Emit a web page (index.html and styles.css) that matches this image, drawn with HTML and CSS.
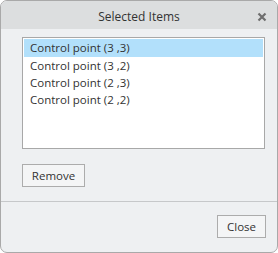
FILE: index.html
```html
<!DOCTYPE html>
<html>
<head>
<meta charset="utf-8">
<link rel="stylesheet" href="styles.css">
</head>
<body>
<div class="dialog">
  <div class="titlebar">
    <span class="title">Selected Items</span>
    <span class="close-x">
      <svg width="10" height="10" viewBox="0 0 10 10"><path d="M1.5 1.5 L8.5 8.5 M8.5 1.5 L1.5 8.5" stroke="#6e6e6e" stroke-width="2.2" stroke-linecap="butt"/></svg>
    </span>
  </div>
  <div class="content">
    <ul class="list">
      <li class="item selected">Control point (3 ,3)</li>
      <li class="item">Control point (3 ,2)</li>
      <li class="item">Control point (2 ,3)</li>
      <li class="item">Control point (2 ,2)</li>
    </ul>
    <button class="btn remove">Remove</button>
  </div>
  <div class="footer">
    <button class="btn close">Close</button>
  </div>
</div>
</body>
</html>
```
FILE: styles.css
```css
html, body {
  margin: 0;
  padding: 0;
  background: #ffffff;
}
.dialog {
  width: 278px;
  height: 253px;
  box-sizing: border-box;
  border: 1px solid #a9a9a9;
  border-radius: 7px;
  background: #eef0f2;
  display: flex;
  flex-direction: column;
  overflow: hidden;
  font-family: "Open Sans", "Noto Sans", sans-serif;
  font-size: 11.5px;
  color: #333333;
}
.titlebar {
  height: 28px;
  background: #dcdedf;
  display: flex;
  align-items: center;
  justify-content: center;
  position: relative;
  flex: none;
}
.title {
  font-size: 12px;
  color: #333;
  margin-top: 3px;
}
.close-x {
  position: absolute;
  right: 10px;
  top: 11px;
  width: 10px;
  height: 10px;
  display: flex;
}
.content {
  padding: 8px 12px 0 21px;
  flex: none;
  height: 173px;
  box-sizing: border-box;
  border-bottom: 1px solid #c6c8ca;
}
.list {
  list-style: none;
  margin: 0;
  padding: 1px;
  height: 112px;
  box-sizing: border-box;
  background: #ffffff;
  border: 1px solid #a8a8a8;
}
.item {
  height: 17px;
  line-height: 17px;
  padding-left: 6px;
}
.item.selected {
  background: #b2e0fb;
  height: 18px;
  line-height: 18px;
}
.btn {
  font-family: "Open Sans", "Noto Sans", sans-serif;
  font-size: 11.5px;
  color: #333;
  background: #f4f5f6;
  border: 1px solid #acacac;
  border-radius: 0;
  height: 23px;
  padding: 0;
  box-sizing: border-box;
}
.remove {
  margin-top: 15px;
  width: 63px;
}
.footer {
  flex: 1;
  display: flex;
  justify-content: flex-end;
  align-items: flex-start;
  padding: 13px 11px 0 0;
}
.close {
  width: 49px;
}
```
